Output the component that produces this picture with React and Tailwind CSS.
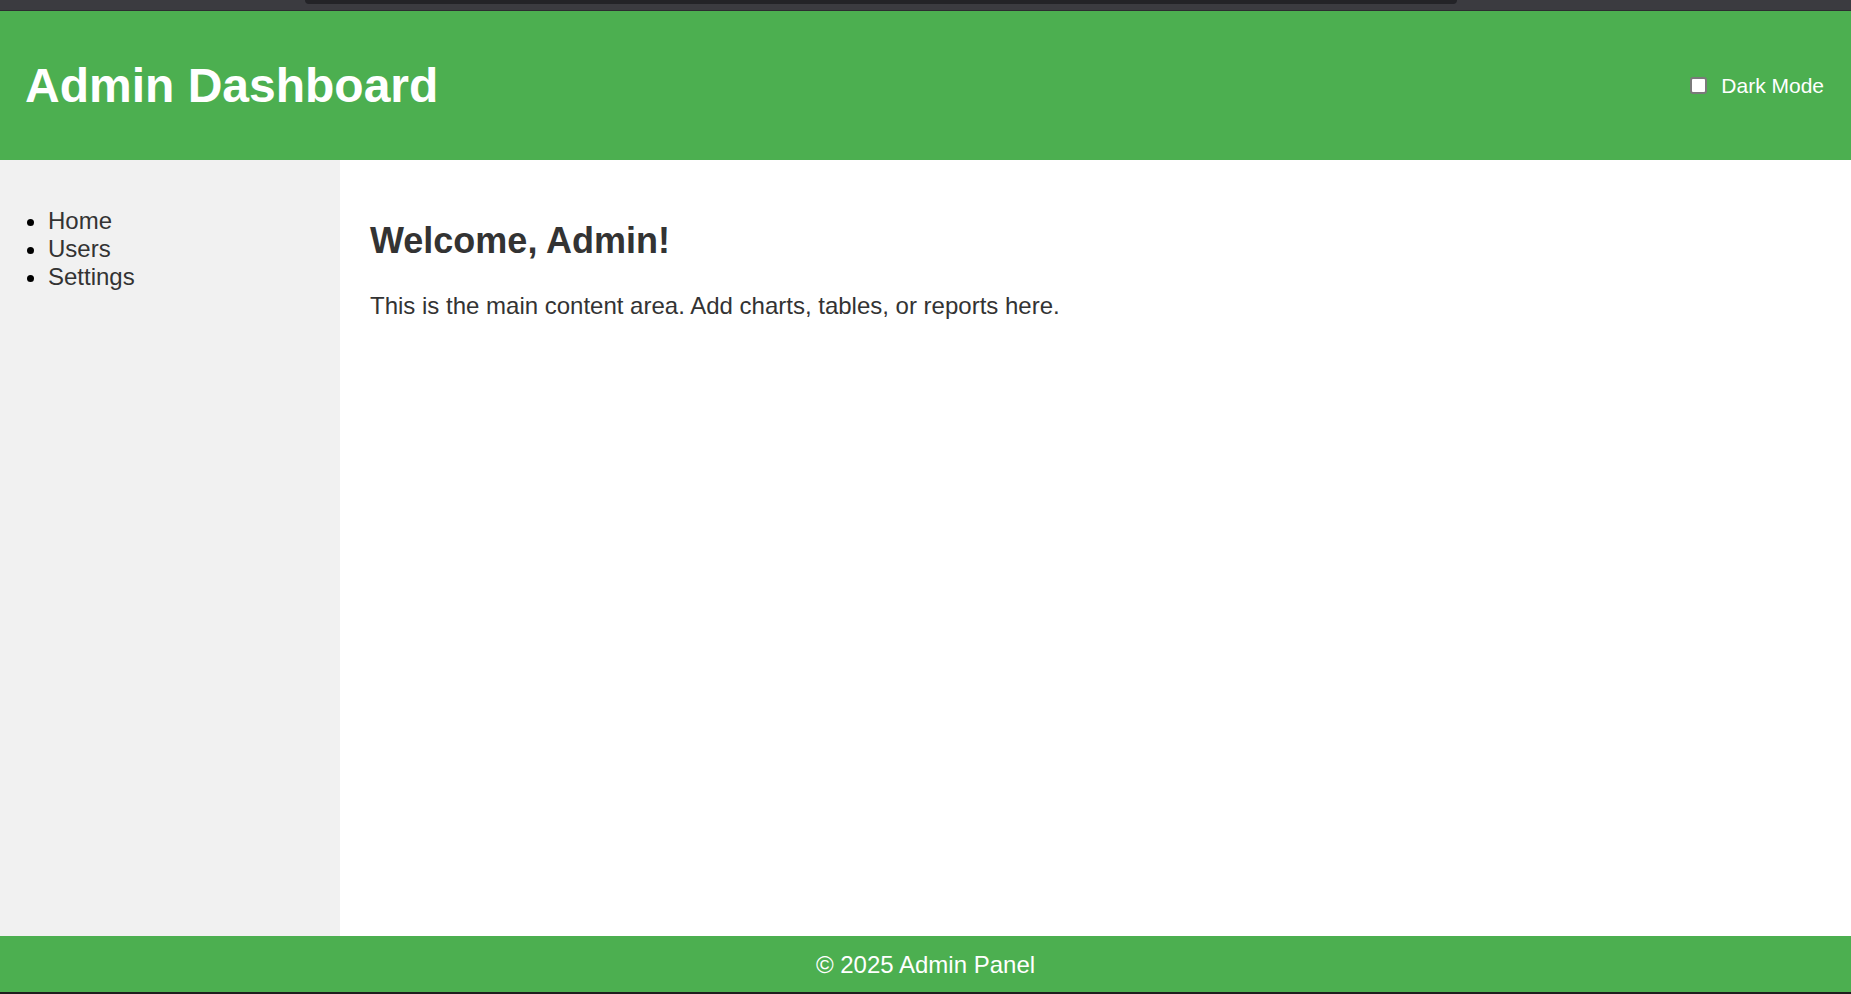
import { useState } from "react";

const App = () => {
  const [darkMode, setDarkMode] = useState(false);

  return (
    <div className="h-screen flex flex-col font-['Liberation_Sans',Arial,sans-serif] overflow-hidden">
      {/* browser chrome strip */}
      <div className="h-[11px] shrink-0 bg-[#3b3b40] border-b border-[#2c2c30] flex">
        <div className="ml-[305px] w-[1152px] h-[4px] bg-[#232327] rounded-b-[4px]" />
      </div>

      {/* Header */}
      <header className="h-[149px] shrink-0 bg-[#4CAF50] text-white flex items-center justify-between pl-[25px] pr-[27px]">
        <h1 className="text-[48px] font-bold leading-[55px]">Admin Dashboard</h1>
        <label className="flex items-center gap-[14px] text-[21px] leading-[24px] cursor-pointer">
          <input
            type="checkbox"
            checked={darkMode}
            onChange={() => setDarkMode(!darkMode)}
            className="appearance-none w-[17px] h-[17px] bg-white border-2 border-[#7a7a7a] rounded-[3px]"
          />
          Dark Mode
        </label>
      </header>

      <div className="flex flex-1 min-h-0">
        {/* Sidebar */}
        <aside className="w-[340px] shrink-0 bg-[#f1f1f1] pt-[47px] pl-[48px]">
          <ul className="list-disc text-[24px] leading-[28px] text-[#333] marker:text-black">
            <li>Home</li>
            <li>Users</li>
            <li>Settings</li>
          </ul>
        </aside>

        {/* Main content */}
        <main className="flex-1 bg-white p-[30px] text-[#333]">
          <h2 className="mt-[30px] text-[36px] font-bold leading-[41.4px]">Welcome, Admin!</h2>
          <p className="mt-[31px] text-[24px] leading-[27.6px]">
            This is the main content area. Add charts, tables, or reports here.
          </p>
        </main>
      </div>

      {/* Footer */}
      <footer className="h-[56px] shrink-0 bg-[#4CAF50] text-white text-[24px] leading-[27.6px] flex items-center justify-center pt-[2px]">
        © 2025 Admin Panel
      </footer>
      <div className="h-[2px] shrink-0 bg-[#1e1e1e]" />
    </div>
  );
};

export default App;
